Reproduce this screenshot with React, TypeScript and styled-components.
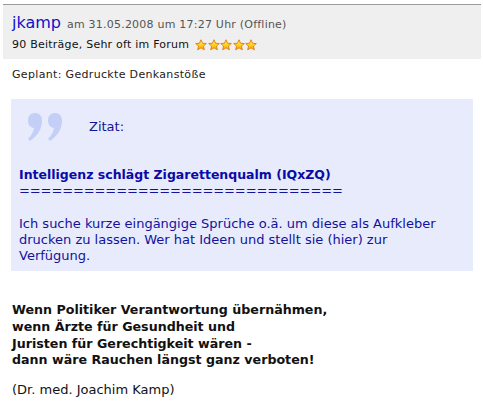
import React from "react";
import styled, { createGlobalStyle } from "styled-components";

const GlobalStyle = createGlobalStyle`
  body {
    margin: 0;
    background: #fff;
    font-family: "DejaVu Sans", Verdana, sans-serif;
    color: #222;
  }
`;

const Page = styled.div`
  padding: 4px 2px 0 3px;
`;

const PostHeader = styled.div`
  border-top: 1px solid #9a9a9a;
  background: #efefef;
  height: 55px;
  box-sizing: border-box;
  padding: 7.5px 0 0 9px;
`;

const TopLine = styled.div`
  display: flex;
  align-items: baseline;
  gap: 6px;
  line-height: 20px;
`;

const UserName = styled.span`
  font-size: 16px;
  color: #1010c8;
`;

const Meta = styled.span`
  font-size: 11px;
  letter-spacing: 0.22px;
  color: #555;
`;

const Rank = styled.div`
  display: flex;
  align-items: center;
  gap: 6px;
  margin-top: 3.7px;
  font-size: 11px;
  line-height: 14px;
  letter-spacing: 0.23px;
  color: #111;
`;

const Stars = styled.span`
  display: inline-flex;
  gap: 0.5px;
`;

const Body = styled.div`
  padding: 8.2px 0 0 9px;
`;

const Subject = styled.div`
  font-size: 11px;
  letter-spacing: 0.33px;
  line-height: 16px;
  color: #222;
`;

const QuoteBox = styled.div`
  margin: 15.8px 8px 0 -1px;
  height: 172px;
  box-sizing: border-box;
  background: #e7ebfc;
  padding: 14px 8px 0 8px;
  color: #12129a;
  font-size: 13px;
  line-height: 16px;
`;

const QuoteHead = styled.div`
  display: flex;
  align-items: center;
  gap: 26px;
  padding-left: 7px;
  margin-bottom: 26.5px;
  height: 28px;
`;

const QuoteTitle = styled.div`
  font-size: 12.5px;
  font-weight: bold;
  color: #0a0aa6;
`;

const Rule = styled.div`
  letter-spacing: -0.1px;
`;

const QuoteText = styled.p`
  margin: 16.7px 0 0;
  max-width: 430px;
`;

const Signature = styled.div`
  margin-top: 31.3px;
  line-height: 16.7px;
  color: #111;
`;

const Verse = styled.div`
  font-size: 12.65px;
  font-weight: bold;
`;

const Source = styled.div`
  margin-top: 12.5px;
  font-size: 13px;
`;

function Star() {
  return (
    <svg width="12" height="12" viewBox="0 0 24 24">
      <defs>
        <linearGradient id="sg" x1="0" y1="0" x2="0" y2="1">
          <stop offset="0" stopColor="#fff59a" />
          <stop offset="0.5" stopColor="#ffd21e" />
          <stop offset="1" stopColor="#f5a300" />
        </linearGradient>
      </defs>
      <path
        d="M12 1.5l3.1 7 7.5.6-5.7 5 1.8 7.4L12 17.6l-6.7 3.9 1.8-7.4-5.7-5 7.5-.6z"
        fill="url(#sg)"
        stroke="#e07a10"
        strokeWidth="1.8"
        strokeLinejoin="round"
      />
    </svg>
  );
}

function QuoteMark() {
  return (
    <svg width="37" height="28" viewBox="0 0 37 28">
      <g fill="#c3cff6">
        <path d="M9 0c4.5 0 7 3 7 7.5 0 8-4.5 15.5-12 20.5l-2-2.2c3.5-3.5 5.5-7 6-10.8C4.5 14.5 2 12 2 7.5 2 3 4.5 0 9 0z" />
        <path d="M29 0c4.5 0 7 3 7 7.5 0 8-4.5 15.5-12 20.5l-2-2.2c3.5-3.5 5.5-7 6-10.8-3.5-0.5-6-3-6-7.5C22 3 24.5 0 29 0z" />
      </g>
    </svg>
  );
}

const verses = [
  "Wenn Politiker Verantwortung übernähmen,",
  "wenn Ärzte für Gesundheit und",
  "Juristen für Gerechtigkeit wären -",
  "dann wäre Rauchen längst ganz verboten!",
];

export default function App() {
  return (
    <Page>
      <GlobalStyle />
      <PostHeader>
        <TopLine>
          <UserName>jkamp</UserName>
          <Meta>am 31.05.2008 um 17:27 Uhr (Offline)</Meta>
        </TopLine>
        <Rank>
          90 Beiträge, Sehr oft im Forum
          <Stars>
            {[0, 1, 2, 3, 4].map((i) => (
              <Star key={i} />
            ))}
          </Stars>
        </Rank>
      </PostHeader>
      <Body>
        <Subject>Geplant: Gedruckte Denkanstöße</Subject>
        <QuoteBox>
          <QuoteHead>
            <QuoteMark />
            <span>Zitat:</span>
          </QuoteHead>
          <QuoteTitle>Intelligenz schlägt Zigarettenqualm (IQxZQ)</QuoteTitle>
          <Rule>{"=".repeat(30)}</Rule>
          <QuoteText>
            Ich suche kurze eingängige Sprüche o.ä. um diese als Aufkleber
            drucken zu lassen. Wer hat Ideen und stellt sie (hier) zur
            Verfügung.
          </QuoteText>
        </QuoteBox>
        <Signature>
          {verses.map((v) => (
            <Verse key={v}>{v}</Verse>
          ))}
          <Source>(Dr. med. Joachim Kamp)</Source>
        </Signature>
      </Body>
    </Page>
  );
}
